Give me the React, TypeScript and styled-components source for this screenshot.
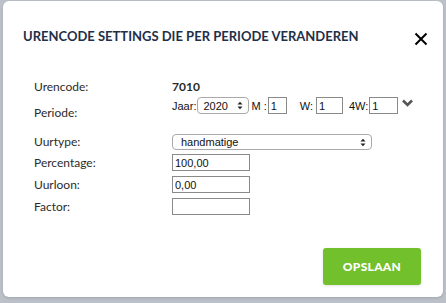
import React, { FC } from 'react';
import styled, { createGlobalStyle } from 'styled-components';

const GlobalStyle = createGlobalStyle`
	html, body {
		margin: 0;
		padding: 0;
		background: #bcc0c9;
	}
	#root {
		width: 446px;
		height: 303px;
		overflow: hidden;
	}
`;

const App: FC = () => {
	return (
		<>
			<GlobalStyle />
			<Backdrop>
				<Modal>
					<Header>
						<Title>URENCODE SETTINGS DIE PER PERIODE VERANDEREN</Title>
						<CloseButton aria-label="close">
							<svg width="14" height="14" viewBox="0 0 14 14">
								<path d="M1.5 1.5 L12.5 12.5 M12.5 1.5 L1.5 12.5" stroke="#000" strokeWidth="2" />
							</svg>
						</CloseButton>
					</Header>
					<Body>
						<Row height={16} top={9}>
							<Label>Urencode:</Label>
							<Value>7010</Value>
						</Row>
						<Row height={24} top={2}>
							<Label alignEnd>Periode:</Label>
							<PeriodFields>
								<SmallText>Jaar:</SmallText>
								<FakeSelect width={52}>
									<span>2020</span>
									<UpDown />
								</FakeSelect>
								<SmallText gap={2}>M :</SmallText>
								<TextInput width={19} defaultValue="1" />
								<SmallText gap={13} after={3}>W:</SmallText>
								<TextInput width={27} defaultValue="1" />
								<SmallText gap={6}>4W:</SmallText>
								<TextInput width={29} defaultValue="1" />
								<Chevron width="11" height="8" viewBox="0 0 11 8">
									<path d="M1 1.5 L5.5 6 L10 1.5" stroke="#555" strokeWidth="2.6" fill="none" />
								</Chevron>
							</PeriodFields>
						</Row>
						<Row height={16} top={13}>
							<Label>Uurtype:</Label>
							<FakeSelect width={200} wide>
								<span>handmatige</span>
								<UpDown />
							</FakeSelect>
						</Row>
						<Row height={17} top={4}>
							<Label>Percentage:</Label>
							<TextInput width={78} defaultValue="100,00" />
						</Row>
						<Row height={17} top={5}>
							<Label>Uurloon:</Label>
							<TextInput width={78} defaultValue="0,00" />
						</Row>
						<Row height={17} top={5}>
							<Label>Factor:</Label>
							<TextInput width={78} defaultValue="" />
						</Row>
					</Body>
					<Footer>
						<SaveButton>OPSLAAN</SaveButton>
					</Footer>
				</Modal>
			</Backdrop>
		</>
	);
};

const UpDown: FC = () => (
	<svg width="6" height="9" viewBox="0 0 6 9">
		<path d="M0.5 3.5 L3 0.8 L5.5 3.5 Z M0.5 5.5 L3 8.2 L5.5 5.5 Z" fill="#222" />
	</svg>
);

const Backdrop = styled.div`
	width: 446px;
	height: 303px;
	padding: 1px 3px 0 3px;
	box-sizing: border-box;
	background: #bcc0c9;
`;

const Modal = styled.div`
	width: 440px;
	height: 296px;
	background: #fff;
	border-radius: 6px;
	box-shadow: 0 1px 3px rgba(0, 0, 0, 0.15);
	display: flex;
	flex-direction: column;
	font-family: Lato, 'Open Sans', sans-serif;
	color: #2b2b2b;
`;

const Header = styled.div`
	height: 69px;
	display: flex;
	align-items: center;
	justify-content: space-between;
	padding: 0 15px 0 20px;
`;

const Title = styled.h2`
	margin: 0;
	font-size: 13px;
	font-weight: 700;
	color: #1f3048;
	letter-spacing: 0;
`;

const CloseButton = styled.button`
	border: none;
	background: none;
	padding: 0;
	margin-top: 6px;
	display: flex;
	cursor: pointer;
`;

const Body = styled.div`
	display: flex;
	flex-direction: column;
	padding-left: 31px;
`;

const Row = styled.div<{ height: number; top: number }>`
	display: grid;
	grid-template-columns: 138px 1fr;
	height: ${(p) => p.height}px;
	margin-top: ${(p) => p.top}px;
	align-items: center;
`;

const Label = styled.div<{ alignEnd?: boolean }>`
	font-size: 12px;
	line-height: 16px;
	align-self: ${(p) => (p.alignEnd ? 'end' : 'center')};
`;

const Value = styled.div`
	font-size: 12px;
	font-weight: 700;
	line-height: 16px;
`;

const PeriodFields = styled.div`
	display: flex;
	align-items: center;
	align-self: start;
	height: 17px;
`;

const SmallText = styled.span<{ gap?: number; after?: number }>`
	font-family: 'Liberation Sans', Arial, sans-serif;
	font-size: 11px;
	color: #111;
	margin-left: ${(p) => p.gap ?? 0}px;
	margin-right: ${(p) => p.after ?? 1}px;
`;

const FakeSelect = styled.div<{ width: number; wide?: boolean }>`
	box-sizing: border-box;
	width: ${(p) => p.width}px;
	height: ${(p) => (p.wide ? 16 : 17)}px;
	border: 1px solid #a9a9a9;
	border-radius: 4px;
	background: #fff;
	display: flex;
	align-items: center;
	justify-content: space-between;
	padding: 0 5px 0 ${(p) => (p.wide ? 8 : 5)}px;
	font-family: 'Liberation Sans', Arial, sans-serif;
	font-size: 11px;
	color: #111;
`;

const TextInput = styled.input<{ width: number }>`
	box-sizing: border-box;
	width: ${(p) => p.width}px;
	height: 17px;
	border: 1px solid #8a8a8a;
	border-radius: 0;
	padding: 0 2px;
	margin: 0;
	font-family: 'Liberation Sans', Arial, sans-serif;
	font-size: 11px;
	color: #111;
	outline: none;
`;

const Chevron = styled.svg`
	margin-left: 4px;
	margin-top: -5px;
`;

const Footer = styled.div`
	margin-top: auto;
	display: flex;
	justify-content: flex-end;
	padding: 0 22px 12px 0;
`;

const SaveButton = styled.button`
	width: 98px;
	height: 37px;
	border: none;
	border-radius: 3px;
	background: #72c02c;
	color: #fff;
	font-family: Lato, 'Open Sans', sans-serif;
	font-weight: 900;
	font-size: 12px;
	letter-spacing: 0.3px;
	box-shadow: 0 1px 3px rgba(0, 0, 0, 0.12);
	cursor: pointer;
`;

export default App;
